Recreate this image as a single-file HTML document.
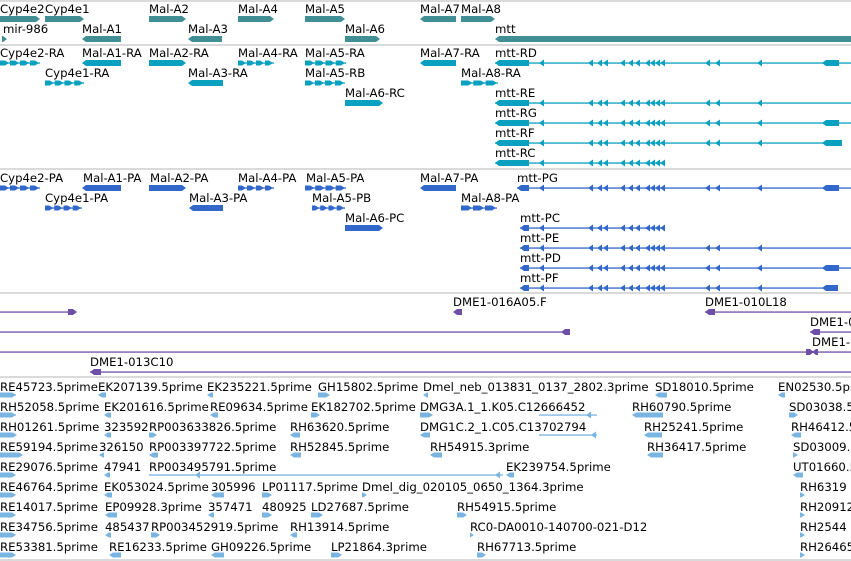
<!DOCTYPE html>
<html><head><meta charset="utf-8"><style>
html,body{margin:0;padding:0;background:#fff;width:851px;height:561px;overflow:hidden}
svg{display:block}
text{font-family:"DejaVu Sans","Liberation Sans",sans-serif;font-size:11.7px;fill:#000}
</style></head><body>
<svg id="s" width="851" height="561" xmlns="http://www.w3.org/2000/svg">
<g stroke="#c4c4c4" stroke-width="1.3">
<line x1="0" y1="1" x2="851" y2="1"/><line x1="0" y1="45" x2="851" y2="45"/>
<line x1="0" y1="169" x2="851" y2="169"/><line x1="0" y1="293" x2="851" y2="293"/>
<line x1="0" y1="377" x2="851" y2="377"/><line x1="0" y1="560" x2="851" y2="560"/>
</g>
<g transform="translate(0,1)">
<text x="0" y="12">Cyp4e2</text><text x="45" y="12">Cyp4e1</text><text x="149" y="12">Mal-A2</text><text x="238" y="12">Mal-A4</text><text x="305" y="12">Mal-A5</text><text x="420" y="12">Mal-A7</text><text x="461" y="12">Mal-A8</text>
<text x="3" y="32">mir-986</text><text x="82" y="32">Mal-A1</text><text x="188" y="32">Mal-A3</text><text x="345" y="32">Mal-A6</text><text x="495" y="32">mtt</text>
<text x="0" y="56">Cyp4e2-RA</text><text x="82" y="56">Mal-A1-RA</text><text x="149" y="56">Mal-A2-RA</text><text x="238" y="56">Mal-A4-RA</text><text x="305" y="56">Mal-A5-RA</text><text x="420" y="56">Mal-A7-RA</text><text x="495" y="56">mtt-RD</text>
<text x="45" y="76">Cyp4e1-RA</text><text x="188" y="76">Mal-A3-RA</text><text x="305" y="76">Mal-A5-RB</text><text x="461" y="76">Mal-A8-RA</text>
<text x="345" y="96">Mal-A6-RC</text><text x="495" y="96">mtt-RE</text>
<text x="495" y="116">mtt-RG</text><text x="495" y="136">mtt-RF</text><text x="495" y="156">mtt-RC</text>
<text x="0" y="181">Cyp4e2-PA</text><text x="83" y="181">Mal-A1-PA</text><text x="150" y="181">Mal-A2-PA</text><text x="238" y="181">Mal-A4-PA</text><text x="306" y="181">Mal-A5-PA</text><text x="420" y="181">Mal-A7-PA</text><text x="517" y="181">mtt-PG</text>
<text x="45" y="201">Cyp4e1-PA</text><text x="189" y="201">Mal-A3-PA</text><text x="312" y="201">Mal-A5-PB</text><text x="461" y="201">Mal-A8-PA</text>
<text x="345" y="221">Mal-A6-PC</text><text x="520" y="221">mtt-PC</text>
<text x="520" y="241">mtt-PE</text><text x="520" y="261">mtt-PD</text><text x="520" y="281">mtt-PF</text>
<text x="453" y="305">DME1-016A05.F</text><text x="705" y="305">DME1-010L18</text>
<text x="810" y="325">DME1-013C10</text><text x="812" y="345">DME1-013C10</text><text x="90" y="365">DME1-013C10</text>

<text x="0" y="390">RE45723.5prime</text><text x="98" y="390">EK207139.5prime</text><text x="207" y="390">EK235221.5prime</text><text x="318" y="390">GH15802.5prime</text><text x="423" y="390">Dmel_neb_013831_0137_2802.3prime</text><text x="655" y="390">SD18010.5prime</text><text x="778" y="390">EN02530.5prime</text>
<text x="0" y="410">RH52058.5prime</text><text x="104" y="410">EK201616.5prime</text><text x="210" y="410">RE09634.5prime</text><text x="311" y="410">EK182702.5prime</text><text x="420" y="410">DMG3A.1_1.K05.C12666452</text><text x="632" y="410">RH60790.5prime</text><text x="789" y="410">SD03038.5prime</text>
<text x="0" y="430">RH01261.5prime</text><text x="104" y="430">323592</text><text x="149" y="430">RP003633826.5prime</text><text x="290" y="430">RH63620.5prime</text><text x="420" y="430">DMG1C.2_1.C05.C13702794</text><text x="644" y="430">RH25241.5prime</text><text x="791" y="430">RH46412.5prime</text>
<text x="0" y="450">RE59194.5prime</text><text x="99" y="450">326150</text><text x="149" y="450">RP003397722.5prime</text><text x="290" y="450">RH52845.5prime</text><text x="430" y="450">RH54915.3prime</text><text x="647" y="450">RH36417.5prime</text><text x="793" y="450">SD03009.5prime</text>
<text x="0" y="470">RE29076.5prime</text><text x="104" y="470">47941</text><text x="149" y="470">RP003495791.5prime</text><text x="506" y="470">EK239754.5prime</text><text x="793" y="470">UT01660.5prime</text>
<text x="0" y="490">RE46764.5prime</text><text x="104" y="490">EK053024.5prime</text><text x="211" y="490">305996</text><text x="262" y="490">LP01117.5prime</text><text x="362" y="490">Dmel_dig_020105_0650_1364.3prime</text><text x="800" y="490">RH6319</text>
<text x="0" y="510">RE14017.5prime</text><text x="105" y="510">EP09928.3prime</text><text x="208" y="510">357471</text><text x="262" y="510">480925</text><text x="311" y="510">LD27687.5prime</text><text x="457" y="510">RH54915.5prime</text><text x="800" y="510">RH20912</text>
<text x="0" y="530">RE34756.5prime</text><text x="105" y="530">485437</text><text x="151" y="530">RP003452919.5prime</text><text x="290" y="530">RH13914.5prime</text><text x="470" y="530">RC0-DA0010-140700-021-D12</text><text x="800" y="530">RH2544</text>
<text x="0" y="550">RE53381.5prime</text><text x="109" y="550">RE16233.5prime</text><text x="211" y="550">GH09226.5prime</text><text x="331" y="550">LP21864.3prime</text><text x="477" y="550">RH67713.5prime</text><text x="800" y="550">RH26465</text>
</g>
<g id="g"></g>
</svg>
<script>
var G=document.getElementById('g'),NS='http://www.w3.org/2000/svg';
function el(t,a){var e=document.createElementNS(NS,t);for(var k in a)e.setAttribute(k,a[k]);G.appendChild(e);}
function box(x1,x2,y,c,d,h){h=h||3;var p;
 if(d>0)p=[x1,y-h,x2-4,y-h,x2,y,x2-4,y+h,x1,y+h];else p=[x1,y,x1+4,y-h,x2,y-h,x2,y+h,x1+4,y+h];
 el('polygon',{points:p.join(' '),fill:c});}
function ln(x1,x2,y,c){el('rect',{x:x1,y:y-0.6,width:x2-x1,height:1.3,fill:c});}
function tri(x,y,c,d){var p=d<0?[x,y,x+5,y-3.5,x+5,y+3.5]:[x+5,y,x,y-3.5,x,y+3.5];el('polygon',{points:p.join(' '),fill:c});}
function chev(x1,x2,y,c,d,n){ln(x1,x2,y,c);var s=(x2-x1)/n;for(var i=0;i<n;i++){box(x1+i*s,x1+i*s+s-1,y,c,d,2.5);}}
var GC='#418f94',RC='#0aa0c0',PC='#3168c9',DC='#6d4fa8',EC='#7ab4e0';
box(0,40,19,GC,1);box(45,84,19,GC,1);box(149,186,19,GC,1);box(238,274,19,GC,1);box(305,345,19,GC,1);box(420,456,19,GC,-1);box(461,495,19,GC,1);
box(2,7,39,GC,1);box(82,121,39,GC,-1);box(188,222,39,GC,-1);box(345,380,39,GC,1);box(495,851,39,GC,-1);
var IN=[539,588,597,603,620,628,635,645,650,655,660,705,715,757];
function mtt(y,c,xs,te,le,endThick){ln(xs,le,y,c);box(xs,te,y,c,-1);IN.forEach(function(x){if(x<le)tri(x,y,c,-1);});if(endThick)box(822,endThick,y,c,-1);}
[[63,RC],[188,PC]].forEach(function(r){var y=r[0],c=r[1];
 chev(0,40,y,c,1,4);box(82,121,y,c,-1,3);box(149,186,y,c,1,3);chev(238,274,y,c,1,4);chev(305,346,y,c,1,4);box(420,456,y,c,-1,3);});
chev(45,84,83,RC,1,4);box(188,223,83,RC,-1,3);chev(305,345,83,RC,1,4);chev(461,498,83,RC,1,3);
box(345,383,103,RC,1,3);
chev(45,82,208,PC,1,4);box(189,223,208,PC,-1,3);chev(312,345,208,PC,1,4);chev(461,497,208,PC,1,3);
box(345,383,228,PC,1,3);
mtt(63,RC,495,529,851,839);mtt(103,RC,495,529,851,0);mtt(123,RC,495,529,851,839);mtt(143,RC,495,529,842,842);mtt(163,RC,495,529,664,0);
mtt(188,PC,517,529,851,839);mtt(228,PC,520,529,664,0);mtt(248,PC,520,529,851,0);mtt(268,PC,520,529,851,839);mtt(288,PC,520,529,838,838);
ln(0,76,312,DC);box(68,77,312,DC,1);box(453,462,312,DC,-1);ln(705,851,312,DC);box(705,715,312,DC,-1);
ln(0,570,332,DC);box(561,570,332,DC,-1);box(810,820,332,DC,-1);ln(810,851,332,DC);
ln(0,808,352,DC);box(806,814,352,DC,1);box(812,818,352,DC,-1);ln(812,851,352,DC);
ln(90,851,372,DC);box(90,101,372,DC,-1);
var E=[[0,16,0,1],[98,106,0,-1],[207,213,0,-1],[318,330,0,1],[423,428,0,-1],[655,667,0,-1],[778,785,0,-1],
[0,16,1,1],[104,111,1,-1],[210,218,1,-1],[311,320,1,1],[420,433,1,1],[632,663,1,-1],[789,798,1,1],
[0,17,2,1],[104,111,2,-1],[149,157,2,1],[290,300,2,-1],[420,430,2,-1],[644,662,2,-1],[791,801,2,-1],
[0,23,3,1],[99,104,3,-1],[149,158,3,-1],[290,301,3,-1],[430,442,3,-1],[647,663,3,-1],[793,798,3,1],
[0,16,4,1],[104,110,4,-1],[506,514,4,-1],[793,803,4,-1],
[0,16,5,1],[104,112,5,-1],[211,224,5,-1],[262,272,5,1],[362,367,5,1],[800,805,5,1],
[0,16,6,1],[105,117,6,-1],[208,214,6,-1],[262,272,6,1],[311,323,6,1],[457,467,6,1],[800,805,6,1],
[0,16,7,1],[105,111,7,-1],[151,160,7,1],[290,297,7,-1],[470,474,7,1],[800,805,7,1],
[0,16,8,1],[109,121,8,-1],[211,224,8,-1],[331,342,8,1],[477,486,8,1],[800,805,8,1]];
E.forEach(function(e){box(e[0],e[1],395+20*e[2],EC,e[3],2.5);});
ln(0,16,395,EC);ln(0,16,415,EC);ln(149,503,475,EC);tri(195,475,EC,-1);tri(495,475,EC,-1);
ln(539,597,415,EC);ln(539,597,435,EC);tri(586,415,EC,-1);tri(591,435,EC,-1);
</script>
</body></html>
